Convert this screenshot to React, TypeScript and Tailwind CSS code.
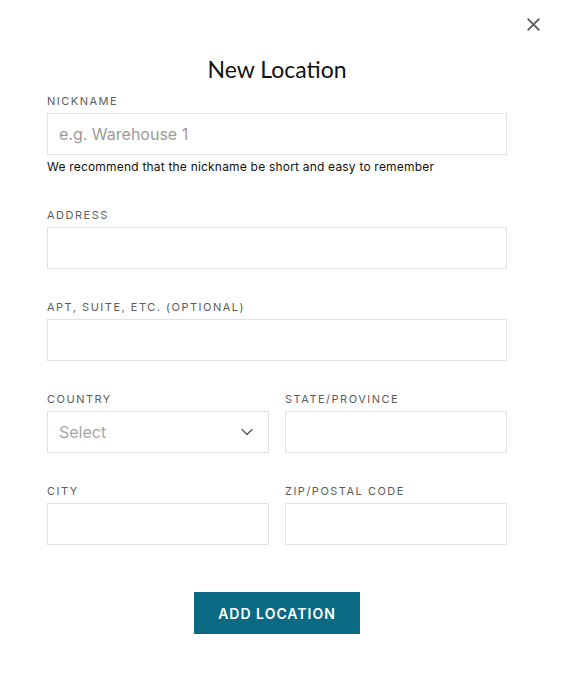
import { X, ChevronDown } from "lucide-react";

function Field({ label, placeholder, select }: { label: string; placeholder?: string; select?: boolean }) {
  return (
    <div className="flex flex-col">
      <label className="text-[11px] leading-4 tracking-[1.5px] text-[#5c5c5c] uppercase mb-1">{label}</label>
      {select ? (
        <div className="h-[42px] border border-[#e3e3e3] flex items-center justify-between px-[11px]">
          <span className="text-[16px] text-[#a6a6a6]">Select</span>
          <ChevronDown className="w-5 h-5 text-[#555]" strokeWidth={1.5} />
        </div>
      ) : (
        <input
          placeholder={placeholder}
          className="h-[42px] border border-[#e3e3e3] px-[11px] text-[16px] placeholder-[#9a9a9a] outline-none"
        />
      )}
    </div>
  );
}

export default function App() {
  return (
    <div className="relative w-[563px] h-[682px] bg-white font-['Inter',sans-serif]">
      <button className="absolute right-[19px] top-[14px] text-[#666]">
        <X className="w-[21px] h-[21px]" strokeWidth={2.3} />
      </button>
      <div className="ml-[47px] w-[460px] pt-[53px] flex flex-col">
        <h1 className="text-center text-[23px] leading-8 text-[#111] font-['Lato',sans-serif] mb-2">New Location</h1>
        <Field label="Nickname" placeholder="e.g. Warehouse 1" />
        <p className="text-[12px] leading-4 tracking-[0.2px] text-[#111] mt-1">We recommend that the nickname be short and easy to remember</p>
        <div className="mt-[32px] flex flex-col gap-[30px]">
          <Field label="Address" />
          <Field label="Apt, Suite, etc. (Optional)" />
          <div className="grid grid-cols-2 gap-4">
            <Field label="Country" select />
            <Field label="State/Province" />
          </div>
          <div className="grid grid-cols-2 gap-4">
            <Field label="City" />
            <Field label="Zip/Postal Code" />
          </div>
        </div>
        <div className="flex justify-center mt-[47px]">
          <button className="w-[166px] h-[42px] bg-[#0b6a83] text-white text-[14px] font-semibold tracking-[1px]">
            ADD LOCATION
          </button>
        </div>
      </div>
    </div>
  );
}
